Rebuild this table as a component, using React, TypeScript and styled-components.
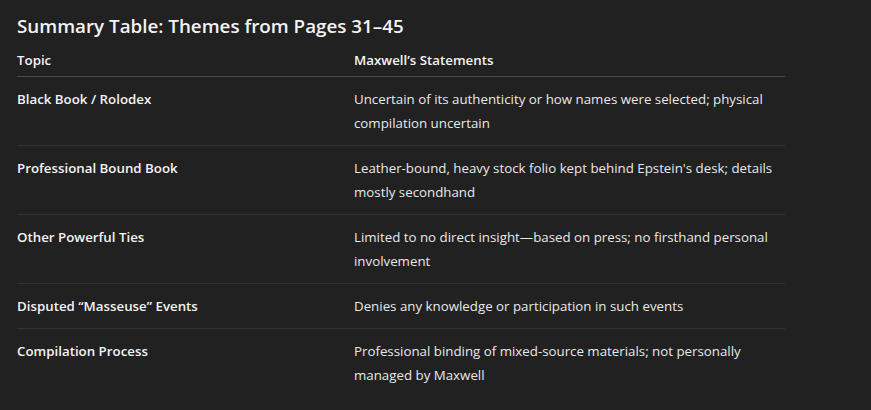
import React from "react";
import styled, { createGlobalStyle } from "styled-components";

const rows: { topic: string; statement: string }[] = [
  {
    topic: "Black Book / Rolodex",
    statement:
      "Uncertain of its authenticity or how names were selected; physical compilation uncertain",
  },
  {
    topic: "Professional Bound Book",
    statement:
      "Leather-bound, heavy stock folio kept behind Epstein's desk; details mostly secondhand",
  },
  {
    topic: "Other Powerful Ties",
    statement:
      "Limited to no direct insight\u2014based on press; no firsthand personal involvement",
  },
  {
    topic: "Disputed \u201CMasseuse\u201D Events",
    statement: "Denies any knowledge or participation in such events",
  },
  {
    topic: "Compilation Process",
    statement:
      "Professional binding of mixed-source materials; not personally managed by Maxwell",
  },
];

const App: React.FC = () => {
  return (
    <>
      <GlobalStyle />
      <Page>
        <Title>Summary Table: Themes from Pages 31–45</Title>
        <Table>
          <colgroup>
            <col style={{ width: 337 }} />
            <col />
          </colgroup>
          <thead>
            <tr>
              <HeadCell>Topic</HeadCell>
              <HeadCell>Maxwell’s Statements</HeadCell>
            </tr>
          </thead>
          <tbody>
            {rows.map((row) => (
              <Row key={row.topic}>
                <TopicCell>{row.topic}</TopicCell>
                <Cell>{row.statement}</Cell>
              </Row>
            ))}
          </tbody>
        </Table>
      </Page>
    </>
  );
};

export default App;

const GlobalStyle = createGlobalStyle`
  html, body {
    margin: 0;
    padding: 0;
    background-color: #212121;
  }
  body {
    font-family: "Open Sans", "Noto Sans", sans-serif;
    color: #ececec;
  }
`;

const Page = styled.div`
  width: 871px;
  height: 410px;
  box-sizing: border-box;
  padding: 12px 17px 0 17px;
  background-color: #212121;
  overflow: hidden;
`;

const Title = styled.h3`
  margin: 0 0 8px 0;
  font-size: 18.8px;
  line-height: 28px;
  font-weight: 600;
  color: #f3f3f3;
`;

const Table = styled.table`
  width: 768px;
  border-collapse: collapse;
  table-layout: fixed;
  font-size: 13.3px;
  line-height: 24px;
`;

const HeadCell = styled.th`
  text-align: left;
  font-weight: 600;
  padding: 0 8px 4px 0;
  border-bottom: 1px solid #4a4a4a;
  color: #f3f3f3;
`;

const Row = styled.tr`
  border-bottom: 1px solid #333333;

  &:last-child {
    border-bottom: none;
  }
`;

const Cell = styled.td`
  vertical-align: top;
  padding: 10px 8px 10px 0;
  color: #e8e8e8;
`;

const TopicCell = styled(Cell)`
  font-weight: 600;
  color: #f3f3f3;
`;
